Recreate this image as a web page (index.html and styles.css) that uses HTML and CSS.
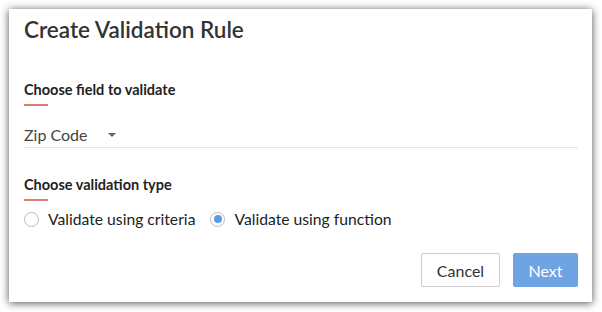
FILE: index.html
```html
<!DOCTYPE html>
<html lang="en">
<head>
  <meta charset="UTF-8" />
  <title>Create Validation Rule</title>
  <link rel="stylesheet" href="styles.css">
</head>
<body>
  <div class="dialog">
    <h1 class="titulo">Create Validation Rule</h1>

    <section class="bloco">
      <h2 class="rotulo">Choose field to validate</h2>
      <div class="campo">
        <span>Zip Code</span>
        <span class="seta"></span>
      </div>
    </section>

    <section class="bloco tipo">
      <h2 class="rotulo">Choose validation type</h2>
      <div class="opcoes">
        <label class="opcao"><span class="radio"></span>Validate using criteria</label>
        <label class="opcao"><span class="radio marcado"></span>Validate using function</label>
      </div>
    </section>

    <div class="acoes">
      <button class="btn cancelar">Cancel</button>
      <button class="btn proximo">Next</button>
    </div>
  </div>
</body>
</html>
```

FILE: styles.css
```css
body {
  margin: 0;
  padding: 9px 10px 10px 9px;
  background: #fff;
  font-family: Lato, 'Open Sans', sans-serif;
  color: #333;
}

.dialog {
  background: #fff;
  height: 293px;
  box-sizing: border-box;
  padding: 5px 14px 0 15px;
  box-shadow: 0 1px 8px rgba(0,0,0,0.7);
  display: flex;
  flex-direction: column;
}

.titulo {
  margin: 0;
  font-size: 22.5px;
  font-weight: 600;
  color: #333;
  line-height: 32px;
}

.bloco {
  margin-top: 35px;
}

.rotulo {
  margin: 0;
  font-size: 14.5px;
  font-weight: 700;
  color: #222;
  line-height: 18px;
}

.rotulo::after {
  content: '';
  display: block;
  width: 24px;
  height: 2px;
  background: #e07a6e;
  margin-top: 5px;
}

.campo {
  display: flex;
  align-items: center;
  gap: 20px;
  margin-top: 19px;
  padding-bottom: 2px;
  border-bottom: 1px solid #e6e6e6;
  font-size: 16px;
  line-height: 20px;
  color: #444;
}

.seta {
  width: 0;
  height: 0;
  border-left: 4px solid transparent;
  border-right: 4px solid transparent;
  border-top: 4px solid #666;
}

.tipo {
  margin-top: 28px;
}

.opcoes {
  display: flex;
  gap: 15px;
  margin-top: 7px;
}

.opcao {
  display: flex;
  align-items: center;
  gap: 9px;
  font-size: 15.7px;
  line-height: 22px;
  color: #222;
}

.radio {
  width: 15px;
  height: 15px;
  border: 1px solid #bbb;
  border-radius: 50%;
  box-sizing: border-box;
  display: flex;
  align-items: center;
  justify-content: center;
}

.radio.marcado::after {
  content: '';
  width: 8px;
  height: 8px;
  border-radius: 50%;
  background: #5b9be6;
}

.acoes {
  margin-top: auto;
  margin-bottom: 15px;
  display: flex;
  justify-content: flex-end;
  gap: 13px;
}

.btn {
  height: 34px;
  border-radius: 2px;
  font-family: Lato, 'Open Sans', sans-serif;
  font-size: 16px;
  padding: 0;
  cursor: pointer;
}

.cancelar {
  width: 79px;
  background: #fff;
  border: 1px solid #ccc;
  color: #333;
}

.proximo {
  width: 65px;
  background: #6ea4e4;
  border: none;
  color: #fff;
}
```
